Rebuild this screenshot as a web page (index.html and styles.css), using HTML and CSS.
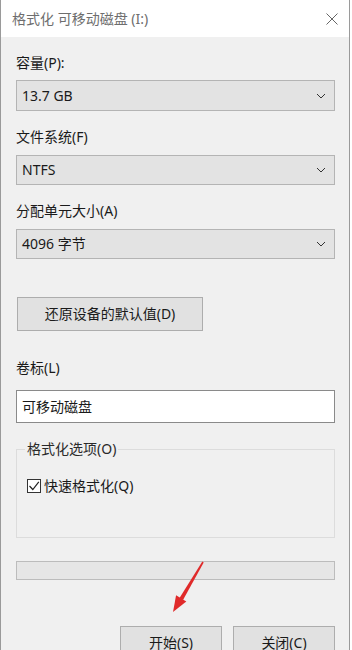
FILE: index.html
```html
<!DOCTYPE html>
<html lang="zh-CN">
<head>
    <meta charset="UTF-8">
    <meta name="viewport" content="width=device-width, initial-scale=1.0">
    <title>格式化 可移动磁盘 (I:)</title>
    <link rel="stylesheet" href="styles.css">
</head>
<body>
    <div class="window">
        <div class="titlebar">
            <span class="title">格式化 可移动磁盘 (I:)</span>
            <svg class="close" width="12" height="12" viewBox="0 0 12 12">
                <path d="M0.5 0.5 L11.5 11.5 M11.5 0.5 L0.5 11.5" stroke="#666" stroke-width="1" fill="none"/>
            </svg>
        </div>
        <div class="content">
            <label class="lbl first">容量(P):</label>
            <div class="combo tall">
                <span>13.7 GB</span>
                <svg class="chev" width="10" height="6" viewBox="0 0 10 6"><path d="M1 1 L5 5 L9 1" stroke="#333" stroke-width="1" fill="none"/></svg>
            </div>

            <label class="lbl">文件系统(F)</label>
            <div class="combo">
                <span>NTFS</span>
                <svg class="chev" width="10" height="6" viewBox="0 0 10 6"><path d="M1 1 L5 5 L9 1" stroke="#333" stroke-width="1" fill="none"/></svg>
            </div>

            <label class="lbl">分配单元大小(A)</label>
            <div class="combo">
                <span>4096 字节</span>
                <svg class="chev" width="10" height="6" viewBox="0 0 10 6"><path d="M1 1 L5 5 L9 1" stroke="#333" stroke-width="1" fill="none"/></svg>
            </div>

            <button class="btn restore">还原设备的默认值(D)</button>

            <label class="lbl vol">卷标(L)</label>
            <div class="textbox">可移动磁盘</div>

            <fieldset class="group">
                <legend>格式化选项(O)</legend>
                <div class="check-row">
                    <span class="checkbox">
                        <svg width="12" height="12" viewBox="0 0 12 12"><path d="M1.5 6 L4.8 9.5 L10.8 1.8" stroke="#222" stroke-width="1.2" fill="none"/></svg>
                    </span>
                    <span>快速格式化(Q)</span>
                </div>
            </fieldset>

            <div class="progress"></div>

            <div class="actions">
                <button class="btn action">开始(S)</button>
                <button class="btn action">关闭(C)</button>
            </div>
        </div>

        <!-- 红色箭头标注 -->
        <svg class="arrow" width="352" height="650" viewBox="0 0 352 650">
            <polygon points="202.3,561.6 203.7,562.4 183,600 179.5,598" fill="#e02a2a"/>
            <polygon points="173,612 176.1,595.2 186.3,601.4" fill="#e02a2a"/>
        </svg>
    </div>
</body>
</html>
```

FILE: styles.css
```css
*{
    margin: 0;
    padding: 0;
    box-sizing: border-box;
}
body{
    width: 352px;
    height: 650px;
    overflow: hidden;
    background-color: #fff;
    font: 14px/20px "Noto Sans", "Noto Sans CJK SC", sans-serif;
    color: #1a1a1a;
}
.window{
    position: relative;
    width: 350px;
    height: 650px;
    background-color: #f0f0f0;
    border-left: 1px solid #9a9a9a;
    border-right: 1px solid #9a9a9a;
}
.titlebar{
    display: flex;
    align-items: center;
    justify-content: space-between;
    height: 37px;
    padding: 0 11px 0 11px;
    background-color: #fff;
}
.title{
    color: #6e6e6e;
    font-size: 14px;
}
.close{
    margin-top: 1px;
}
.content{
    padding: 0 14px 0 15px;
}
.lbl{
    display: block;
    line-height: 20px;
    margin-top: 16px;
}
.lbl.first{
    margin-top: 16px;
}
.combo{
    display: flex;
    align-items: center;
    justify-content: space-between;
    height: 30px;
    margin-top: 8px;
    padding: 0 8px 0 5px;
    background-color: #e3e3e3;
    border: 1px solid #b4b4b4;
}
.combo.tall{
    height: 31px;
    margin-top: 7px;
}
.btn{
    font: inherit;
    color: #1a1a1a;
    background-color: #e1e1e1;
    border: 1px solid #adadad;
}
.restore{
    display: block;
    width: 186px;
    height: 34px;
    margin: 38px 0 0 1px;
}
.lbl.vol{
    margin-top: 27px;
}
.textbox{
    height: 33px;
    margin-top: 12px;
    padding: 0 5px;
    line-height: 31px;
    background-color: #fff;
    border: 1px solid #8a8a8a;
}
.group{
    margin-top: 16px;
    padding: 0 8px 41px 10px;
    border: 1px solid #dcdcdc;
}
.group legend{
    padding: 0 2px;
    margin-left: -2px;
    line-height: 20px;
    color: #2a2a2a;
}
.check-row{
    display: flex;
    align-items: center;
    gap: 3px;
    margin-top: 17px;
    line-height: 20px;
}
.checkbox{
    display: flex;
    align-items: center;
    justify-content: center;
    width: 14px;
    height: 14px;
    border: 1px solid #333;
    background-color: #fff;
}
.progress{
    height: 19px;
    margin-top: 23px;
    background-color: #e6e6e6;
    border: 1px solid #bcbcbc;
}
.actions{
    display: flex;
    justify-content: flex-end;
    gap: 11px;
    margin-top: 46px;
}
.action{
    width: 102px;
    height: 34px;
}
.arrow{
    position: absolute;
    left: -1px;
    top: 0;
    pointer-events: none;
}
```
